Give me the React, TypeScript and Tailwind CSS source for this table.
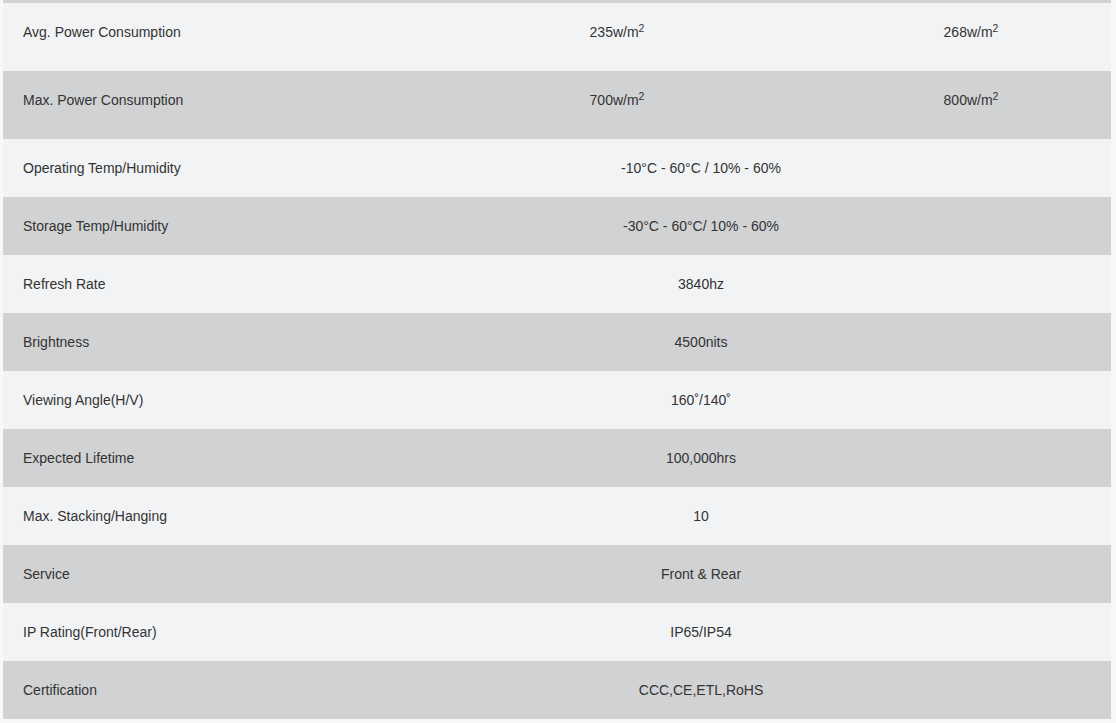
const rows: { label: string; values: React.ReactNode[] }[] = [
  {
    label: 'Avg. Power Consumption',
    values: [
      <>235w/m<sup>2</sup></>,
      <>268w/m<sup>2</sup></>,
    ],
  },
  {
    label: 'Max. Power Consumption',
    values: [
      <>700w/m<sup>2</sup></>,
      <>800w/m<sup>2</sup></>,
    ],
  },
  { label: 'Operating Temp/Humidity', values: ['-10°C - 60°C / 10% - 60%'] },
  { label: 'Storage Temp/Humidity', values: ['-30°C - 60°C/ 10% - 60%'] },
  { label: 'Refresh Rate', values: ['3840hz'] },
  { label: 'Brightness', values: ['4500nits'] },
  { label: 'Viewing Angle(H/V)', values: ['160˚/140˚'] },
  { label: 'Expected Lifetime', values: ['100,000hrs'] },
  { label: 'Max. Stacking/Hanging', values: ['10'] },
  { label: 'Service', values: ['Front & Rear'] },
  { label: 'IP Rating(Front/Rear)', values: ['IP65/IP54'] },
  { label: 'Certification', values: ['CCC,CE,ETL,RoHS'] },
];

const SpecRow = ({ label, values, index }: { label: string; values: React.ReactNode[]; index: number }) => {
  const shade = index % 2 === 0 ? 'bg-[#f2f3f5]' : 'bg-[#d1d2d4]';
  const split = values.length > 1;

  return (
    <div
      className={`grid grid-cols-[288px_652px_56px_1fr] ${shade} ${
        split ? 'h-[68px]' : 'h-[58px]'
      } text-[14px] leading-[18px] text-[#333]`}
    >
      <div className="pl-5 pt-5">{label}</div>
      {split ? (
        <>
          <div className="pt-5 text-center whitespace-nowrap">{values[0]}</div>
          <div className="pt-5 text-center whitespace-nowrap">{values[1]}</div>
          <div />
        </>
      ) : (
        <div className="col-span-3 pt-5 text-center whitespace-nowrap">{values[0]}</div>
      )}
    </div>
  );
};

export default function App() {
  return (
    <div
      className="w-[1116px] h-[723px] overflow-hidden bg-[#f8f8f8] pl-[3px]"
      style={{ fontFamily: '"Liberation Sans", Arial, sans-serif' }}
    >
      <div className="w-[1108px]">
        <div className="h-[3px] bg-[#d1d2d4]" />
        {rows.map((row, index) => (
          <SpecRow key={row.label} index={index} {...row} />
        ))}
      </div>
    </div>
  );
}
